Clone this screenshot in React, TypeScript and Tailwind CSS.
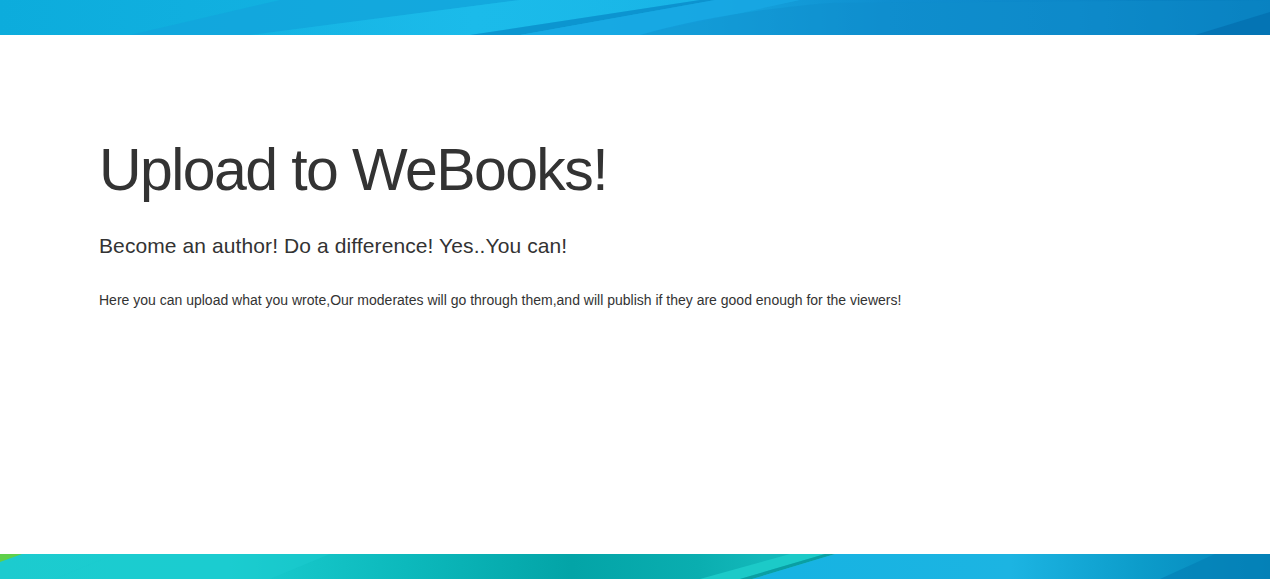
import React from 'react';

function TopBand() {
    return (
        <div className="h-[35px] w-full overflow-hidden bg-[#14a6dd]">
            <svg className="h-full w-full" viewBox="0 0 1270 35" preserveAspectRatio="none">
                <defs>
                    <linearGradient id="topBase" x1="0" y1="0" x2="1" y2="0">
                        <stop offset="0" stopColor="#0cacdc" />
                        <stop offset="0.4" stopColor="#17b4e4" />
                        <stop offset="0.55" stopColor="#16a7e0" />
                        <stop offset="0.7" stopColor="#0f8ecf" />
                        <stop offset="0.85" stopColor="#0c87c8" />
                        <stop offset="1" stopColor="#0479b9" />
                    </linearGradient>
                    <linearGradient id="topLight" x1="0" y1="0" x2="1" y2="0">
                        <stop offset="0" stopColor="#1bbbea" stopOpacity="0.2" />
                        <stop offset="0.5" stopColor="#1bbbea" stopOpacity="1" />
                        <stop offset="1" stopColor="#1bbbea" stopOpacity="0.6" />
                    </linearGradient>
                </defs>
                <rect x="0" y="0" width="1270" height="35" fill="url(#topBase)" />
                <polygon points="130,35 280,0 520,0 250,35" fill="#12a4dc" opacity="0.7" />
                <polygon points="250,35 520,0 700,0 470,35" fill="url(#topLight)" />
                <polygon points="470,35 700,0 715,0 520,35" fill="#0a8cc9" opacity="0.75" />
                <polygon points="520,35 715,0 800,0 640,35" fill="#18a8e4" opacity="0.8" />
                <path d="M 640 35 Q 720 12 830 3 L 1270 0 L 1270 35 Z" fill="#0f8dcd" opacity="0.45" />
                <polygon points="1195,35 1270,12 1270,35" fill="#0471b0" opacity="0.8" />
            </svg>
        </div>
    );
}

function BottomBand() {
    return (
        <div className="h-[25px] w-full overflow-hidden bg-[#10bfc9]">
            <svg className="h-full w-full" viewBox="0 0 1270 25" preserveAspectRatio="none">
                <defs>
                    <linearGradient id="botBase" x1="0" y1="0" x2="1" y2="0">
                        <stop offset="0" stopColor="#1ccbcf" />
                        <stop offset="0.18" stopColor="#1acdd0" />
                        <stop offset="0.32" stopColor="#0cb9bc" />
                        <stop offset="0.45" stopColor="#03a4a7" />
                        <stop offset="0.55" stopColor="#0aaeb0" />
                        <stop offset="0.6" stopColor="#13b8ba" />
                        <stop offset="1" stopColor="#13b8ba" />
                    </linearGradient>
                    <linearGradient id="botBlue" x1="0" y1="0" x2="1" y2="0">
                        <stop offset="0" stopColor="#16b3e2" />
                        <stop offset="0.5" stopColor="#1cb4e2" />
                        <stop offset="0.75" stopColor="#0c9cca" />
                        <stop offset="1" stopColor="#0583ba" />
                    </linearGradient>
                </defs>
                <rect x="0" y="0" width="1270" height="25" fill="url(#botBase)" />
                <polygon points="0,0 22,0 0,8" fill="#5fd04a" />
                <polygon points="55,25 115,0 330,0 270,25" fill="#1bcbd0" opacity="0.5" />
                <polygon points="700,25 790,0 825,0 740,25" fill="#1ccac8" />
                <polygon points="740,25 825,0 835,0 752,25" fill="#0a9fa3" />
                <polygon points="752,25 835,0 1270,0 1270,25" fill="url(#botBlue)" />
                <polygon points="1160,25 1215,0 1270,0 1270,25" fill="#0480b6" opacity="0.7" />
            </svg>
        </div>
    );
}

export default function App() {
    return (
        <div className="flex h-[579px] w-full flex-col bg-white font-['Liberation_Sans',Arial,sans-serif] text-[#333333]">
            <TopBand />

            {/* Jumbotron */}
            <main className="flex-1 px-[99px] pt-[103px]">
                <h1 className="text-[59px] leading-[1.1] tracking-[-1.6px]">Upload to WeBooks!</h1>
                <h3 className="mt-[31px] text-[21px] leading-[1.1] tracking-[0.1px]">Become an author! Do a difference! Yes..You can!</h3>
                <p className="mt-[34px] text-[14px] leading-[1.4]">
                    Here you can upload what you wrote,Our moderates will go through them,and will publish if they are good enough for the viewers!
                </p>
            </main>

            <BottomBand />
        </div>
    );
}
